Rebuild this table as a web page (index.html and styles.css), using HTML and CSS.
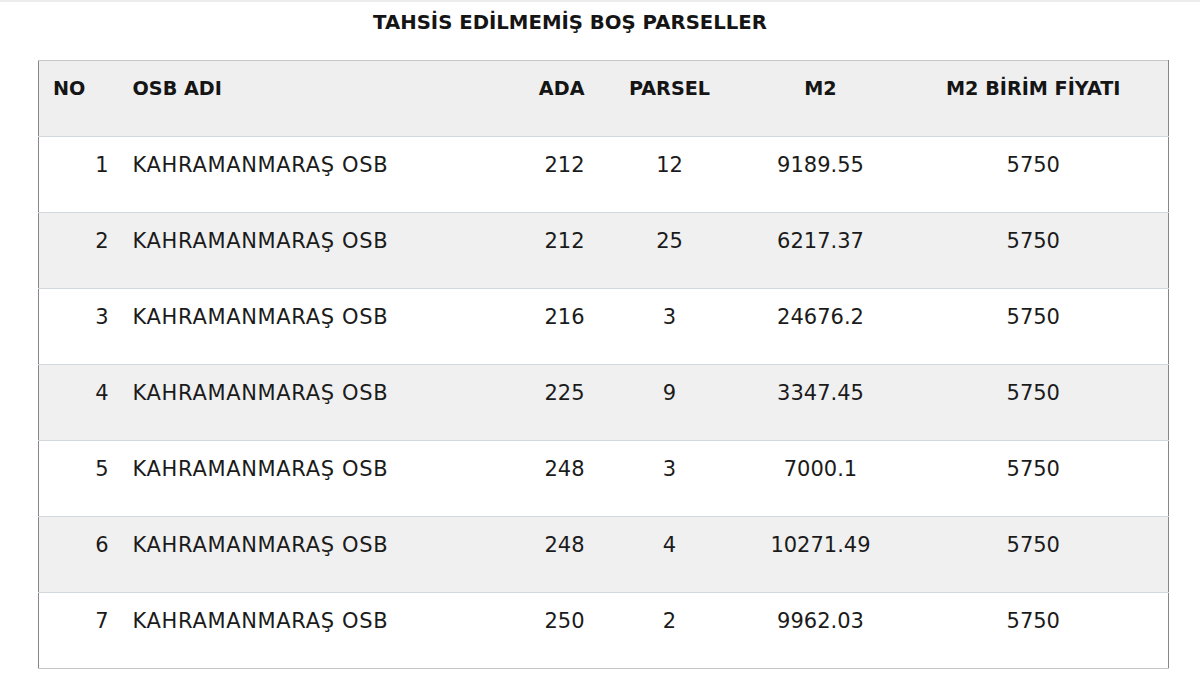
FILE: index.html
```html
<!DOCTYPE html>
<html lang="tr">
<head>
<meta charset="utf-8">
<title>Tahsis Edilmemiş Boş Parseller</title>
<link rel="stylesheet" href="styles.css">
</head>
<body>
<div class="page">
  <h1 class="title">TAHSİS EDİLMEMİŞ BOŞ PARSELLER</h1>
  <table class="grid">
    <colgroup>
      <col class="c-no"><col class="c-name"><col class="c-ada"><col class="c-parsel"><col class="c-m2"><col class="c-price">
    </colgroup>
    <thead>
      <tr><th class="l">NO</th><th class="l">OSB ADI</th><th class="r">ADA</th><th class="c">PARSEL</th><th class="c">M2</th><th class="c">M2 BİRİM FİYATI</th></tr>
    </thead>
    <tbody>
      <tr><td class="r">1</td><td class="l name">KAHRAMANMARAŞ OSB</td><td class="r">212</td><td class="c">12</td><td class="c">9189.55</td><td class="c">5750</td></tr>
      <tr><td class="r">2</td><td class="l name">KAHRAMANMARAŞ OSB</td><td class="r">212</td><td class="c">25</td><td class="c">6217.37</td><td class="c">5750</td></tr>
      <tr><td class="r">3</td><td class="l name">KAHRAMANMARAŞ OSB</td><td class="r">216</td><td class="c">3</td><td class="c">24676.2</td><td class="c">5750</td></tr>
      <tr><td class="r">4</td><td class="l name">KAHRAMANMARAŞ OSB</td><td class="r">225</td><td class="c">9</td><td class="c">3347.45</td><td class="c">5750</td></tr>
      <tr><td class="r">5</td><td class="l name">KAHRAMANMARAŞ OSB</td><td class="r">248</td><td class="c">3</td><td class="c">7000.1</td><td class="c">5750</td></tr>
      <tr><td class="r">6</td><td class="l name">KAHRAMANMARAŞ OSB</td><td class="r">248</td><td class="c">4</td><td class="c">10271.49</td><td class="c">5750</td></tr>
      <tr><td class="r">7</td><td class="l name">KAHRAMANMARAŞ OSB</td><td class="r">250</td><td class="c">2</td><td class="c">9962.03</td><td class="c">5750</td></tr>
    </tbody>
  </table>
</div>
</body>
</html>
```
FILE: styles.css
```css
html, body {
  margin: 0;
  padding: 0;
  background: #ffffff;
}
body {
  font-family: "DejaVu Sans", "Open Sans", sans-serif;
  color: #1b1b1b;
  width: 1200px;
  height: 700px;
  overflow: hidden;
  border-top: 2px solid #ececec;
  box-sizing: border-box;
}
.page {
  padding: 0 32px 0 38px;
}
.title {
  margin: 0;
  padding: 9px 66px 0 0;
  height: 58px;
  box-sizing: border-box;
  text-align: center;
  font-size: 19.7px;
  font-weight: 700;
  line-height: 24px;
  color: #151515;
}
.grid {
  width: 1130px;
  border-collapse: collapse;
  border-top: 1px solid #c4c6c8;
  border-bottom: 1px solid #c4c6c8;
  border-left: 1px solid #858789;
  border-right: 1px solid #858789;
  table-layout: fixed;
}
.c-no { width: 82px; }
.c-name { width: 396px; }
.c-ada { width: 80px; }
.c-parsel { width: 146px; }
.c-m2 { width: 156px; }
.c-price { width: 270px; }
.grid th, .grid td {
  height: 76px;
  box-sizing: border-box;
  vertical-align: top;
  padding: 16px 12px 0 12px;
  line-height: 24px;
  font-size: 21px;
  white-space: nowrap;
}
.grid th {
  font-size: 19.2px;
  font-weight: 700;
  background: #efefef;
  color: #151515;
}
.grid th.l:first-child { padding-left: 14px; }
.grid td.name { letter-spacing: 0.65px; }
.grid tbody tr { border-top: 1px solid #d3d8dc; }
.grid tbody tr:nth-child(even) { background: #f0f0f0; }
.grid tbody tr:nth-child(odd) { background: #ffffff; }
.l { text-align: left; }
.r { text-align: right; }
.c { text-align: center; }
```
